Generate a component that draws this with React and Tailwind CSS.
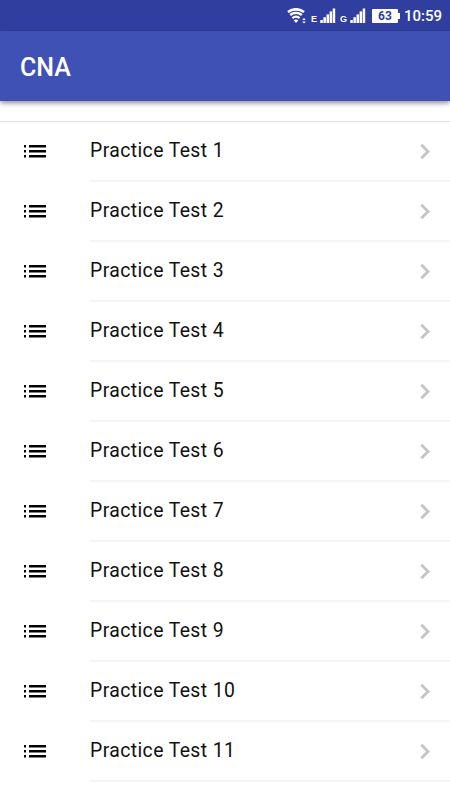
const tests = Array.from({ length: 11 }, (_, i) => `Practice Test ${i + 1}`);

const WifiIcon = () => (
  <svg className="w-[21px] h-4" viewBox="0 0 21 16" fill="none">
    <path d="M1 4C5.6 0.4 12.4 0.4 17 4" stroke="white" strokeWidth="2.7" />
    <path d="M3.2 7.1C6.6 4.4 11.4 4.4 14.8 7.1" stroke="white" strokeWidth="2.5" />
    <path d="M5.4 10.1C7.6 8.3 10.4 8.3 12.6 10.1" stroke="white" strokeWidth="2.3" />
    <path d="M6.6 12.3C8.2 11.1 9.8 11.1 11.4 12.3L9 15Z" fill="white" />
    <path d="M15.2 12L17 10L18.8 12ZM15.2 13.6L17 15.6L18.8 13.6Z" fill="white" />
  </svg>
);

const SignalIcon = () => (
  <svg className="w-4 h-4" viewBox="0 0 16 16" fill="white">
    <rect x="0.3" y="12" width="2.5" height="3" />
    <rect x="3.4" y="9.2" width="2.5" height="5.8" />
    <rect x="6.5" y="6.4" width="2.5" height="8.6" />
    <rect x="9.6" y="3.4" width="2.5" height="11.6" />
    <rect x="12.7" y="0.5" width="2.5" height="14.5" />
  </svg>
);

const StatusBar = () => (
  <div className="flex items-center h-[31px] pl-[287px] bg-[#303f9f] text-white">
    <WifiIcon />
    <span className="w-3 pl-[3px] pt-2 text-[9px] leading-none font-bold font-['Liberation_Sans',sans-serif]">E</span>
    <SignalIcon />
    <span className="w-[14px] pl-[4px] pt-2 text-[9px] leading-none font-bold font-['Liberation_Sans',sans-serif]">G</span>
    <SignalIcon />
    <div className="flex items-center ml-[6px]">
      <div className="flex items-center justify-center w-[26px] h-[14px] rounded-[1px] bg-white text-[#303f9f] text-[12px] leading-none font-bold">
        63
      </div>
      <div className="w-[2px] h-[6px] bg-white" />
    </div>
    <span className="ml-[4px] pt-[2px] text-[15px] leading-none font-medium">10:59</span>
  </div>
);

const ListIcon = () => (
  <svg className="w-[22px] h-[13px]" viewBox="0 0 22 13" fill="black">
    <path d="M0 0h2v2.4H0zM5 0h17v2.4H5zM0 5h2v2.4H0zM5 5h17v2.4H5zM0 10h2v2.4H0zM5 10h17v2.4H5z" />
  </svg>
);

const ChevronIcon = () => (
  <svg className="w-[10px] h-4 mt-px" viewBox="0 0 10 16" fill="none">
    <path d="M1.3 0.8L8 7.5L1.3 14.2" stroke="#c4c4c9" strokeWidth="2.9" />
  </svg>
);

const TestRow = ({ label }) => (
  <li className="flex h-[60px] pl-6">
    <div className="flex items-center w-[66px] pb-[1px]">
      <ListIcon />
    </div>
    <div className="flex flex-1 items-center justify-between pr-5 border-b-2 border-[#f4f4f4]">
      <span className="text-[19.4px] leading-6 tracking-[0.4px] text-[#111111]">{label}</span>
      <ChevronIcon />
    </div>
  </li>
);

const App = () => {
  return (
    <div className="h-[800px] overflow-hidden bg-white font-['Roboto',sans-serif]">
      <StatusBar />
      <header className="flex items-center h-[70px] px-5 pt-[2px] bg-[#3f51b5] shadow-[0_2px_5px_rgba(0,0,0,0.45)]">
        <h1 className="text-[25px] leading-none font-medium text-white">CNA</h1>
      </header>
      <ul className="mt-5 border-t border-[#e3e3e3]">
        {tests.map((label) => (
          <TestRow key={label} label={label} />
        ))}
      </ul>
    </div>
  );
};

export default App;
